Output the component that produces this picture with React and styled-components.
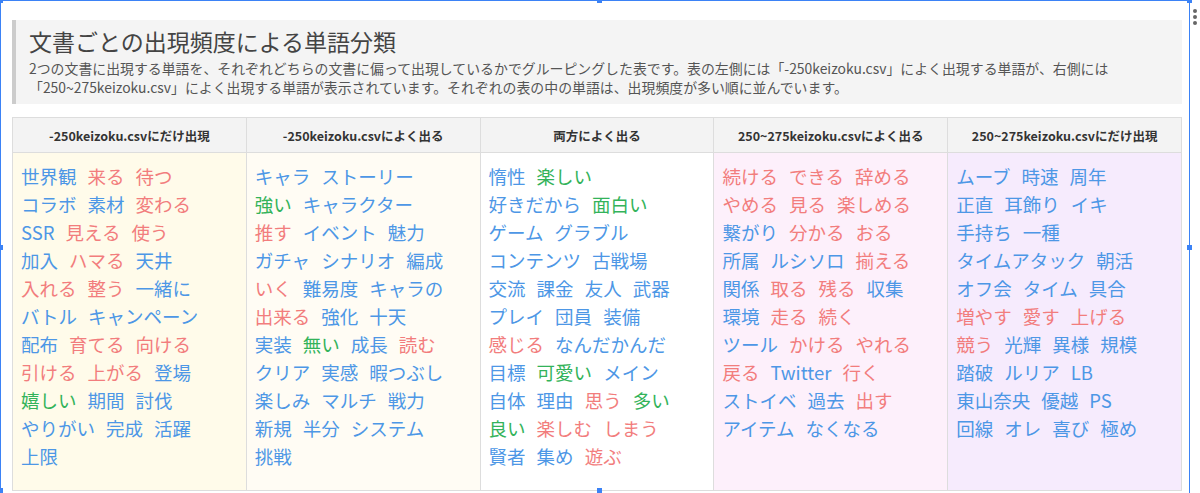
import React from 'react'
import styled, { createGlobalStyle } from 'styled-components'

const Global = createGlobalStyle`
  html, body { margin: 0; padding: 0; background: #fff; }
  body { font-family: "Noto Sans CJK JP", "Noto Sans", sans-serif; }
`

const Frame = styled.div`
  position: relative;
  width: 1190px;
  height: 493px;
  box-sizing: border-box;
  border: 1.5px solid #3b82f6;
  border-bottom: none;
  padding: 19px 7px 0 11px;
`

const Handle = styled.span`
  position: absolute;
  width: 5px;
  height: 5px;
  background: #3b82f6;
  ${p => p.pos}
`

const Dots = styled.div`
  position: absolute;
  right: -8px;
  top: 8px;
  display: flex;
  flex-direction: column;
  gap: 2px;
  span { width: 4px; height: 4px; border-radius: 50%; background: #666; }
`

const Intro = styled.div`
  background: #f4f4f4;
  border-left: 4px solid #ccc;
  padding: 6px 14px 7px 13px;
`

const Title = styled.h2`
  margin: 0 0 3px;
  font-size: 23px;
  font-weight: 400;
  color: #444;
  line-height: 30px;
`

const Lead = styled.p`
  margin: 0;
  font-size: 13.9px;
  line-height: 19px;
  color: #555;
  white-space: nowrap;
`

const Table = styled.div`
  margin-top: 13px;
  display: grid;
  grid-template-columns: repeat(5, 1fr);
  border: 1px solid #ddd;
  border-right: none;
`

const Head = styled.div`
  background: #f3f3f3;
  border-right: 1px solid #ddd;
  border-bottom: 1px solid #ddd;
  height: 34px;
  display: flex;
  align-items: center;
  justify-content: center;
  font-size: 12.5px;
  font-weight: 700;
  color: #333;
`

const Cell = styled.div`
  background: ${p => p.bg};
  border-right: 1px solid #ddd;
  padding: 9px 6px 6px 8px;
  display: flex;
  flex-wrap: wrap;
  align-content: flex-start;
  column-gap: 11px;
  height: 322px;
`

const Word = styled.span`
  font-size: 18.5px;
  line-height: 28px;
  color: ${p => ({ b: '#4d97e6', r: '#f27d7d', g: '#33b35a' }[p.c])};
`

const Br = styled.div`
  flex-basis: 100%;
  height: 0;
`

const cols = [
  ['-250keizoku.csvにだけ出現', '#fffbea', '世界観b 来るr 待つr|コラボb 素材b 変わるr|SSRb 見えるr 使うr|加入b ハマるr 天井b|入れるr 整うr 一緒にb|バトルb キャンペーンb|配布b 育てるr 向けるr|引けるr 上がるr 登場b|嬉しいg 期間b 討伐b|やりがいb 完成b 活躍b|上限b'],
  ['-250keizoku.csvによく出る', '#fffcf4', 'キャラb ストーリーb|強いg キャラクターb|推すr イベントb 魅力b|ガチャb シナリオb 編成b|いくr 難易度b キャラのb|出来るr 強化b 十天b|実装b 無いg 成長b 読むr|クリアb 実感b 暇つぶしb|楽しみb マルチb 戦力b|新規b 半分b システムb|挑戦b'],
  ['両方によく出る', '#ffffff', '惰性b 楽しいg|好きだからb 面白いg|ゲームb グラブルb|コンテンツb 古戦場b|交流b 課金b 友人b 武器b|プレイb 団員b 装備b|感じるr なんだかんだb|目標b 可愛いg メインb|自体b 理由b 思うr 多いg|良いg 楽しむr しまうr|賢者b 集めb 遊ぶr'],
  ['250~275keizoku.csvによく出る', '#fdf0fb', '続けるr できるr 辞めるr|やめるr 見るr 楽しめるr|繋がりb 分かるr おるr|所属b ルシソロb 揃えるr|関係b 取るr 残るr 収集b|環境b 走るr 続くr|ツールb かけるr やれるr|戻るr Twitterb 行くr|ストイベb 過去b 出すr|アイテムb なくなるb'],
  ['250~275keizoku.csvにだけ出現', '#f6ebfd', 'ムーブb 時速b 周年b|正直b 耳飾りb イキb|手持ちb 一種b|タイムアタックb 朝活b|オフ会b タイムb 具合b|増やすr 愛すr 上げるr|競うr 光輝b 異様b 規模b|踏破b ルリアb LBb|東山奈央b 優越b PSb|回線b オレb 喜びb 極めb'],
]

const Lines = ({ spec }) =>
  spec.split('|').map((line, i) => (
    <React.Fragment key={i}>
      {line.split(' ').map((w, j) => (
        <Word key={j} c={w.slice(-1)}>{w.slice(0, -1)}</Word>
      ))}
      <Br />
    </React.Fragment>
  ))

export default function App() {
  return (
    <>
      <Global />
      <Frame>
        <Handle pos="left:-3px;top:-3px;" />
        <Handle pos="left:596px;top:-3px;" />
        <Handle pos="right:-3px;top:-3px;" />
        <Handle pos="left:-3px;top:244px;" />
        <Handle pos="right:-3px;top:244px;" />
        <Handle pos="left:-3px;bottom:0;" />
        <Handle pos="left:596px;bottom:0;" />
        <Dots><span /><span /><span /></Dots>
        <Intro>
          <Title>文書ごとの出現頻度による単語分類</Title>
          <Lead>
            2つの文書に出現する単語を、それぞれどちらの文書に偏って出現しているかでグルーピングした表です。表の左側には「-250keizoku.csv」によく出現する単語が、右側には
            <br />
            「250~275keizoku.csv」によく出現する単語が表示されています。それぞれの表の中の単語は、出現頻度が多い順に並んでいます。
          </Lead>
        </Intro>
        <Table>
          {cols.map(([h]) => <Head key={h}>{h}</Head>)}
          {cols.map(([h, bg, spec]) => (
            <Cell key={h} bg={bg}><Lines spec={spec} /></Cell>
          ))}
        </Table>
      </Frame>
    </>
  )
}
